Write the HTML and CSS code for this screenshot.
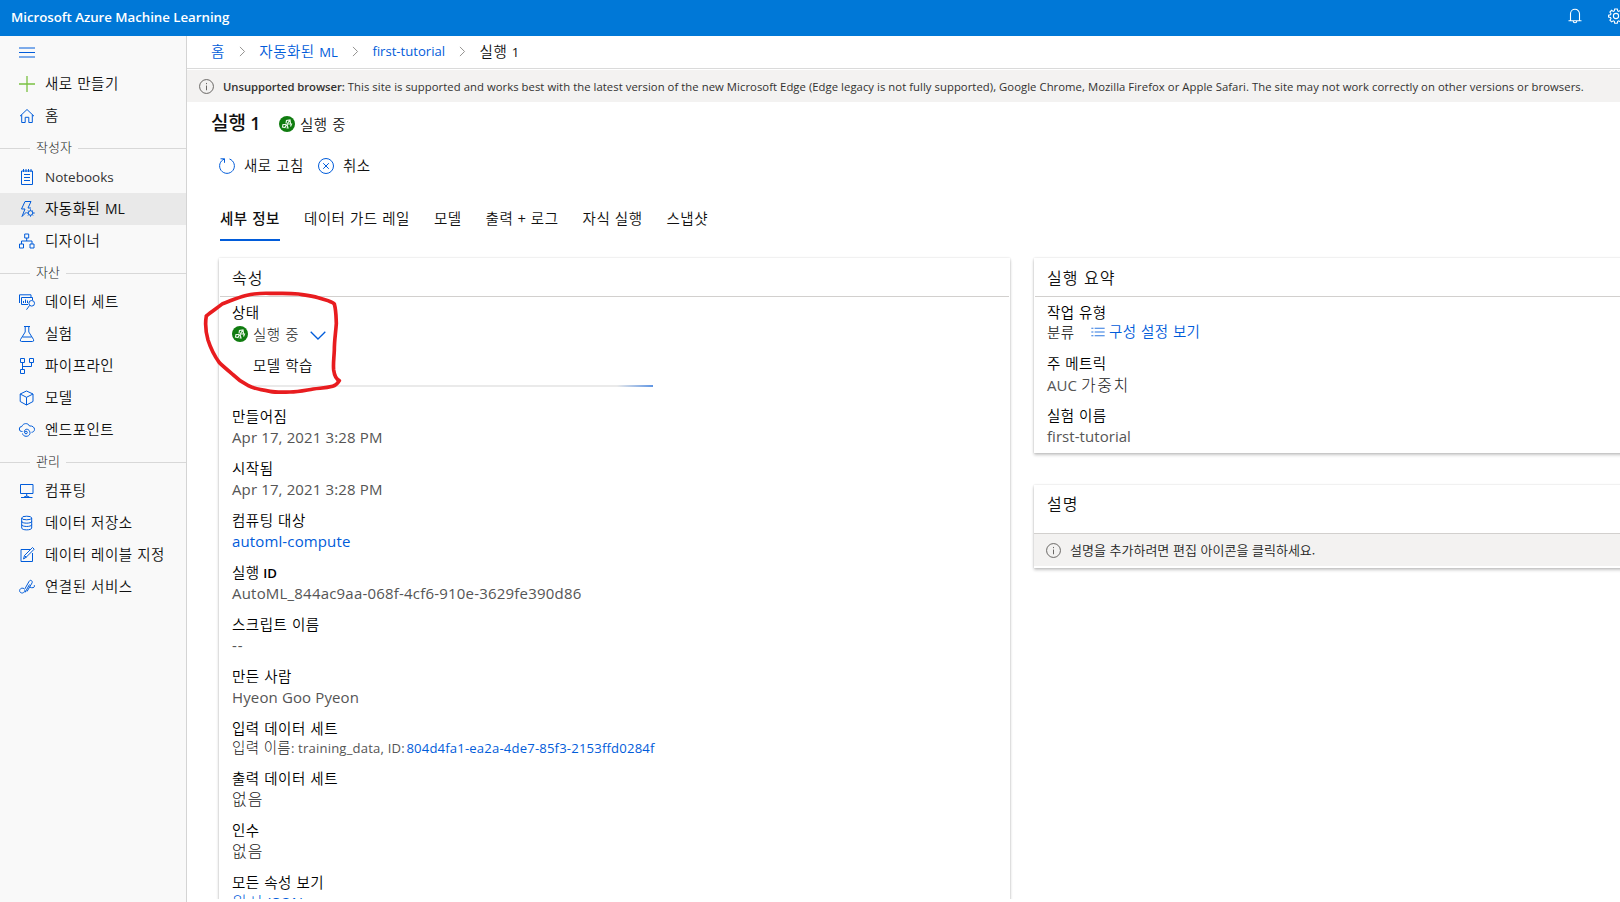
FILE: index.html
```html
<!DOCTYPE html>
<html lang="ko">
<head>
<meta charset="utf-8">
<title>Microsoft Azure Machine Learning</title>
<link rel="stylesheet" href="styles.css">
</head>
<body>
<header class="topbar">
  <span class="brand">Microsoft Azure Machine Learning</span>
  <div class="topbar-icons">
    <svg class="bell" viewBox="0 0 16 16"><path d="M3.500 12.500V5.700a4.500 4.500 0 0 1 9 0V12.500M1.500 12.700h13M6.200 13a1.800 1.800 0 0 0 3.600 0"/></svg>
    <svg class="gear" viewBox="0 0 16 16"><path d="M6.700 1h2.600l.4 1.900 1 .5 1.700-1.100 1.700 1.700-1.100 1.700.5 1 1.900.4v2l-1.900.4-.5 1 1.100 1.700-1.700 1.700-1.700-1.100-1 .5-.4 1.900H6.700l-.4-1.900-1-.5-1.700 1.100-1.700-1.700L3 10.500l-.5-1L.6 9.100v-2l1.900-.4.5-1L1.900 4l1.700-1.700 1.700 1.100 1-.5z"/><circle cx="8" cy="8" r="2.600"/></svg>
  </div>
</header>
<div class="shell">
  <nav class="sidebar">
    <div class="nav-item"><svg class="ico" viewBox="0 0 16 16"><path d="M0 4h16M0 8.500h16M0 13h16"/></svg></div>
    <div class="nav-item"><svg class="ico plus" viewBox="0 0 16 16"><path d="M8 0v16M0 8h16"/></svg><span>새로 만들기</span></div>
    <div class="nav-item"><svg class="ico" viewBox="0 0 16 16"><path d="M1 8.200 8 1.500l7 6.700M2.700 6.800v7.700h3.500V9.300h3.600v5.200h3.500V6.800"/></svg><span>홈</span></div>
    <div class="nav-sep"><span>작성자</span></div>
    <div class="nav-item"><svg class="ico" viewBox="0 0 16 16"><path d="M2.500 2h11v13.500h-11zM4.500 0v3M7 0v3M9.500 0v3M12 0v3M5 5.500h6M5 8.500h6M5 11.500h6"/></svg><span class="latin">Notebooks</span></div>
    <div class="nav-item active"><svg class="ico" viewBox="0 0 16 16"><path d="M9 7 12 .5H6L2.500 8H6l-3 7.500L7.500 11M9 7h3"/><circle cx="11.500" cy="12" r="2.300"/><path d="M11.500 8.300v1.400M11.500 14.300v1.400M7.800 12h1.400M13.800 12h1.900M9 9.500l.9.900M13.100 13.600l.9.900M9 14.500l.9-.9M13.100 10.400l.9-.9"/></svg><span>자동화된 <i class="latin">ML</i></span></div>
    <div class="nav-item"><svg class="ico" viewBox="0 0 16 16"><path d="M5.700 1h4v4h-4zM.5 11h4v4h-4zM11 11h4v4h-4zM7.700 5v3M2.500 11V8H13v3"/></svg><span>디자이너</span></div>
    <div class="nav-sep"><span>자산</span></div>
    <div class="nav-item"><svg class="ico" viewBox="0 0 16 16"><path d="M2.500 10.500H9M2.500 10.500v-7h11V6M.5 9V.8h11.500v2.500M4.500 9V7M6.500 9V5.500M8.500 9V6.500M10.600 11.400 7.500 15.700"/><circle cx="12.700" cy="9.300" r="2.800"/></svg><span>데이터 세트</span></div>
    <div class="nav-item"><svg class="ico" viewBox="0 0 16 16"><path d="M5 .5h6M6.200.5V6L1.500 13.500q-.8 2 1 2h11q1.800 0 1-2L9.800 6V.5M3.500 11h9"/></svg><span>실험</span></div>
    <div class="nav-item"><svg class="ico" viewBox="0 0 16 16"><path d="M1.500.5h4v4h-4zM10.500.5h4v4h-4zM1.500 11.500h4v4h-4zM3.500 4.500v7M3.500 8.500h9v-4"/></svg><span>파이프라인</span></div>
    <div class="nav-item"><svg class="ico" viewBox="0 0 16 16"><path d="M7.500 1 14 4v7.500l-6.500 3.500L1.200 11.500V4zM1.200 4l6.300 3.300L14 4M7.500 7.300V15"/></svg><span>모델</span></div>
    <div class="nav-item"><svg class="ico" viewBox="0 0 16 16"><path d="M3.500 9.500H2.800a2.500 2.500 0 0 1 0-5C4 1 9 .5 10.500 4c3-.5 5 1.500 5 3.300 0 2-1.500 3-3 3M3.500 11.500C4 15 10 15.500 11 11.500 11.200 6 4.500 6 5.500 10.500"/><circle cx="7" cy="10.500" r="1.300"/></svg><span>엔드포인트</span></div>
    <div class="nav-sep"><span>관리</span></div>
    <div class="nav-item"><svg class="ico" viewBox="0 0 16 16"><path d="M1.500 1.500h12.500v9H1.500zM7.700 10.500v3M2 14.500h11.500M5 14q2.700-2 5.400 0"/></svg><span>컴퓨팅</span></div>
    <div class="nav-item"><svg class="ico" viewBox="0 0 16 16"><ellipse cx="7.700" cy="3" rx="5" ry="1.800"/><path d="M2.700 3v10c0 2.500 10 2.500 10 0V3M2.700 6.300c0 2.500 10 2.500 10 0M2.700 9.600c0 2.500 10 2.500 10 0"/></svg><span>데이터 저장소</span></div>
    <div class="nav-item"><svg class="ico" viewBox="0 0 16 16"><path d="M11 2.500H2v12h11.500V6M4.500 12l1-3.500 8-8 1.700 1.700-8 8zM5.500 8.500l2 2"/></svg><span>데이터 레이블 지정</span></div>
    <div class="nav-item"><svg class="ico" viewBox="0 0 16 16"><path d="M5.500 10.500 10 2.500c1.500-2.500 4-.5 3 1.500L8 12.500M6 13.500 10.500 5.500M5 9.500C1 8-.5 12 1.500 13.500c2.500 1.500 4-.5 4.500-2.500M10.500 8c4 2 6-.5 4.500-2"/></svg><span>연결된 서비스</span></div>
  </nav>
  <main class="main">
    <div class="crumbs">
      <a class="c-home">홈</a><svg class="chev" viewBox="0 0 7 12"><path d="M1 1l5 5-5 5"/></svg>
      <a class="c-auto">자동화된 <i class="latin">ML</i></a><svg class="chev" viewBox="0 0 7 12"><path d="M1 1l5 5-5 5"/></svg>
      <a class="c-exp latin">first-tutorial</a><svg class="chev" viewBox="0 0 7 12"><path d="M1 1l5 5-5 5"/></svg>
      <span>실행 <i class="latin">1</i></span>
    </div>
    <div class="banner">
      <svg class="info" viewBox="0 0 16 16"><circle cx="8" cy="8" r="7.400"/><path d="M8 7v5M8 4.200v1.300"/></svg>
      <p><b>Unsupported browser:</b> This site is supported and works best with the latest version of the new Microsoft Edge (Edge legacy is not fully supported), Google Chrome, Mozilla Firefox or Apple Safari. The site may not work correctly on other versions or browsers.</p>
    </div>
    <div class="title-row">
      <h1>실행 <i class="latin">1</i></h1>
      <svg class="run" viewBox="0 0 16 16"><circle cx="8" cy="8" r="8"/><path d="M7 7.500 7.500 4.500l3.500-.5.500 3.500M11 4 8.500 7.500M8 8l4.500 0-1 2.500M8 8.500 9 12H7.500M7.500 8.500 4 8.500 3.500 11 6 11.500 7.500 8.500"/></svg>
      <span>실행 중</span>
    </div>
    <div class="toolbar">
      <svg class="ico" viewBox="0 0 16 16"><path d="M5.500 1A7.400 7.400 0 1 0 10.500 1M1.500.8h4v4"/></svg><span class="t-refresh">새로 고침</span>
      <svg class="ico" viewBox="0 0 16 16"><circle cx="8" cy="8" r="7.500"/><path d="M5.200 5.200l5.600 5.600M10.800 5.200l-5.600 5.600"/></svg><span>취소</span>
    </div>
    <div class="tabs">
      <span class="tab on">세부 정보</span><span class="tab">데이터 가드 레일</span><span class="tab">모델</span><span class="tab">출력 + 로그</span><span class="tab">자식 실행</span><span class="tab">스냅샷</span>
    </div>
    <div class="cards">
      <section class="card props">
        <h2>속성</h2>
        <div class="body">
          <div class="label">상태</div>
          <div class="status">
            <svg class="run" viewBox="0 0 16 16"><circle cx="8" cy="8" r="8"/><path d="M7 7.500 7.500 4.500l3.500-.5.500 3.500M11 4 8.500 7.500M8 8l4.500 0-1 2.500M8 8.500 9 12H7.500M7.500 8.500 4 8.500 3.500 11 6 11.500 7.500 8.500"/></svg>
            <span>실행 중</span>
            <svg class="down" viewBox="0 0 16 9"><path d="M.7.700 8 8l7.300-7.300"/></svg>
          </div>
          <div class="step">모델 학습</div>
          <div class="progress"></div>
          <div class="field"><div class="label">만들어짐</div><div class="value">Apr 17, 2021 3:28 PM</div></div>
          <div class="field"><div class="label">시작됨</div><div class="value">Apr 17, 2021 3:28 PM</div></div>
          <div class="field"><div class="label">컴퓨팅 대상</div><div class="value"><a>automl-compute</a></div></div>
          <div class="field"><div class="label">실행 <b>ID</b></div><div class="value id">AutoML_844ac9aa-068f-4cf6-910e-3629fe390d86</div></div>
          <div class="field"><div class="label">스크립트 이름</div><div class="value dashes">--</div></div>
          <div class="field"><div class="label">만든 사람</div><div class="value">Hyeon Goo Pyeon</div></div>
          <div class="field"><div class="label">입력 데이터 세트</div><div class="value small"><span class="ko">입력 이름</span>: training_data, ID: <a>804d4fa1-ea2a-4de7-85f3-2153ffd0284f</a></div></div>
          <div class="field"><div class="label">출력 데이터 세트</div><div class="value ko">없음</div></div>
          <div class="field"><div class="label">인수</div><div class="value ko">없음</div></div>
          <div class="field"><div class="label">모든 속성 보기</div><div class="value raw"><a><span class="ko">원시</span> JSON</a></div></div>
        </div>
      </section>
      <div class="side">
        <section class="card">
          <h2>실행 요약</h2>
          <div class="body">
            <div class="field"><div class="label">작업 유형</div>
              <div class="value task"><span class="kind">분류</span><svg class="list" viewBox="0 0 16 12"><path d="M0 1.500h2.500M0 6h2.500M0 10.500h2.500" class="dots"/><path d="M4 1.500h12M4 6h12M4 10.500h12"/></svg><a>구성 설정 보기</a></div></div>
            <div class="field"><div class="label">주 메트릭</div><div class="value">AUC <span class="ko">가중치</span></div></div>
            <div class="field"><div class="label">실험 이름</div><div class="value">first-tutorial</div></div>
          </div>
        </section>
        <section class="card desc">
          <h2>설명</h2>
          <div class="note"><svg class="info" viewBox="0 0 16 16"><circle cx="8" cy="8" r="7.400"/><path d="M8 7v5M8 4.200v1.300"/></svg><span>설명을 추가하려면 편집 아이콘을 클릭하세요.</span></div>
        </section>
      </div>
    </div>
  </main>
</div>
<svg class="marker" viewBox="0 0 1440 600"><path d="M49 228C65 215 80 205 98 191 125 181 145 172 165 167 190 161 215 159 240 160 270 161 295 159 325 162 350 166 365 168 385 173 405 180 425 183 433 192 439 215 438 235 439 250 437 280 433 300 433 330 432 355 429 370 431 390 433 405 436 416 448 422 442 432 436 437 428 439 405 445 390 444 370 447 345 451 325 456 300 456 275 457 255 457 240 454 215 450 190 446 175 437 155 427 140 415 128 403 110 388 97 377 88 368 75 350 62 325 54 300 47 275 45 250 49 228"/></svg>
</body>
</html>
```
FILE: styles.css
```css
* { box-sizing: border-box; }
body {
  margin: 0;
  height: 902px;
  overflow: hidden;
  background: #fff;
  color: #111;
  font: 350 14.5px/20px "Noto Sans CJK KR", sans-serif;
  letter-spacing: .5px;
  white-space: nowrap;
}
h1, h2, p { margin: 0; }
i { font-style: normal; }
a { color: #015cda; }
svg { display: block; flex: none; fill: none; stroke: #015cda; overflow: visible; }
.latin { font-family: "Open Sans", sans-serif; font-size: 13.5px; font-weight: 400; letter-spacing: 0; }
.ico { width: 16px; height: 16px; }

.topbar {
  height: 36px;
  background: #0078d7;
  display: flex;
  align-items: center;
  justify-content: space-between;
  padding-left: 11px;
}
.brand { color: #fff; font: 600 13.3px/20px "Open Sans", sans-serif; letter-spacing: -.04px; padding-bottom: 2px; }
.topbar-icons { display: flex; gap: 25px; margin-right: -4px; padding-bottom: 4px; }
.topbar-icons svg { stroke: #fff; width: 16px; height: 16px; stroke-width: 1.100; }

.shell { display: flex; height: 866px; }
.sidebar { width: 187px; background: #f9f9f9; border-right: 1px solid #d4d4d4; }
.nav-item { height: 32px; display: flex; align-items: center; gap: 10px; padding-left: 19px; }
.nav-item span { padding-bottom: 3px; }
.nav-item .latin { padding-bottom: 1px; color: #333; }
.nav-item .plus { stroke: #7ac143; stroke-width: 1.300; }
.active { background: #e9e9e9; font-weight: 400; }
.active span { padding-bottom: 1px; }
.nav-item i.latin { font-size: 14px; color: #111; }
.nav-sep { height: 29px; display: flex; align-items: center; gap: 6px; padding-top: 4px; font-size: 13px; font-weight: 300; color: #222; letter-spacing: 0; }
.nav-sep span { margin-top: -4px; }
.nav-sep::before { content: ""; width: 30px; height: 1px; background: #d8d8d8; }
.nav-sep::after { content: ""; flex: 1; height: 1px; background: #d8d8d8; }

.main { flex: 1; height: 863px; min-width: 0; overflow: hidden; }
.crumbs { height: 33px; border-bottom: 1px solid #dadada; display: flex; align-items: center; padding: 0 0 2px 24px; }
.crumbs .latin { font-size: 13.1px; }
.chev { width: 6.500px; height: 11px; margin: 0 14px; stroke: #8a8886; }
.banner { height: 32px; margin-top: 1px; background: #f3f2f1; display: flex; align-items: center; padding-left: 12px; gap: 9px; }
.info { width: 15px; height: 15px; stroke: #605e5c; }
.banner p { font: 400 11.3px/20px "Open Sans", sans-serif; letter-spacing: .046px; color: #323130; padding-top: 2px; }
.banner b { font-weight: 600; letter-spacing: -.06px; }
.title-row { height: 44px; display: flex; align-items: center; padding: 0 0 0 24px; }
.title-row h1 { font-size: 19px; line-height: 28px; font-weight: 500; letter-spacing: 0; width: 68px; margin-top: -3px; }
.title-row h1 .latin { font-size: 18px; font-weight: 600; margin-left: -1px; }
.run { width: 16px; height: 16px; margin-right: 5px; stroke: #e8f5e8; stroke-width: 1.200; }
.run circle { fill: #107c10; stroke: none; }
.toolbar { height: 40px; display: flex; align-items: center; gap: 9px; padding-left: 32px; }
.toolbar span { padding-bottom: 2px; }
.t-refresh { margin-right: 5px; }
.tabs { display: flex; gap: 24px; padding: 14px 0 0 33px; height: 55px; margin-bottom: 17px; }
.tab { line-height: 36px; height: 41px; }
.on { font-weight: 500; border-bottom: 2px solid #015cda; }

.cards { display: flex; gap: 24px; align-items: flex-start; padding-left: 32px; }
.card { background: #fff; box-shadow: 0 2px 3px rgba(0,0,0,.22), 0 0 2px rgba(0,0,0,.14); }
.card h2 { height: 39px; margin: 0 1px; padding: 0 12px; border-bottom: 1px solid #d2d0ce; font-size: 16px; line-height: 38px; font-weight: 350; letter-spacing: 1px; }
.props { width: 791px; height: 700px; flex: none; }
.body { padding: 4px 13px 0; }
.label { height: 21px; line-height: 21px; color: #000; }
.label b { font: 600 13.2px/20px "Open Sans", sans-serif; letter-spacing: 0; margin-left: -1px; }
.value { height: 22px; font: 400 15px/22px "Open Sans", sans-serif; letter-spacing: .13px; color: #555; }
.value.id { letter-spacing: .2px; }
.value.dashes { letter-spacing: 1px; }
.value.small { height: 20px; font-size: 13.1px; line-height: 18px; letter-spacing: .18px; }
.value .ko, .value.ko { font-family: "Noto Sans CJK KR", sans-serif; font-weight: 300; font-size: 16px; letter-spacing: 1px; color: #222; }
.value.ko { line-height: 20px; }
.value a .ko { color: inherit; }
.value.raw { line-height: 18px; }
.value.small .ko { font-size: 14.500px; letter-spacing: .3px; }
.value.small a { margin-left: -2px; }
.field { margin-bottom: 9px; }
.status { height: 24px; display: flex; align-items: center; color: #222; font-weight: 300; }
.down { width: 16px; height: 9px; margin: 3px 0 0 11px; stroke-width: 1.300; }
.step { height: 36px; padding: 9px 0 0 21px; }
.progress { width: 400px; height: 2px; margin: 3px 0 18px 21px; background: linear-gradient(90deg, #eaeaea 91%, #5f95e3 100%); }
.side { width: 640px; flex: none; }
.side .card { height: 195px; letter-spacing: .4px; }
.side .field:first-child { margin-bottom: 8px; }
.side .value { line-height: 22px; letter-spacing: .05px; }
.side .value .ko { letter-spacing: 1.500px; }
.side .value.task { height: 22px; padding-bottom: 2px; display: flex; align-items: center; font-family: "Noto Sans CJK KR", sans-serif; font-weight: 350; font-size: 14.500px; letter-spacing: .4px; }
.task .kind { width: 44px; color: #333; }
.task a { padding-bottom: 3px; }
.list { width: 14px; height: 10px; margin-right: 4px; }
.side .desc { height: 83px; margin-top: 32px; }
.side .desc h2 { height: 49px; margin: 0; padding-left: 13px; line-height: 37px; }
.note { height: 32px; background: #f3f2f1; display: flex; align-items: center; gap: 9px; padding-left: 12px; font-size: 13px; letter-spacing: 0; color: #222; }
.marker { position: absolute; left: 190px; top: 240px; width: 480px; height: 200px; stroke: #e81c1f; stroke-width: 11; stroke-linecap: round; stroke-linejoin: round; }
```
